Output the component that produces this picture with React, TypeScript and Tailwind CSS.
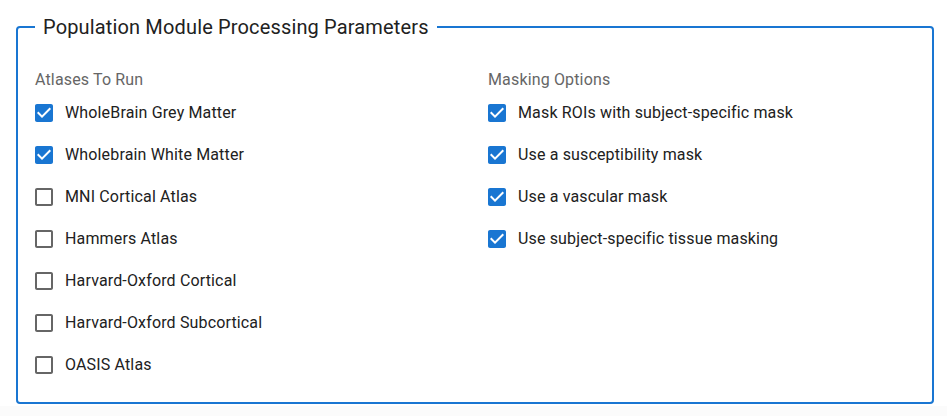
import { useState } from "react"

const atlases = [
  { id: "wbgm", label: "WholeBrain Grey Matter", checked: true },
  { id: "wbwm", label: "Wholebrain White Matter", checked: true },
  { id: "mni", label: "MNI Cortical Atlas", checked: false },
  { id: "hammers", label: "Hammers Atlas", checked: false },
  { id: "hoc", label: "Harvard-Oxford Cortical", checked: false },
  { id: "hos", label: "Harvard-Oxford Subcortical", checked: false },
  { id: "oasis", label: "OASIS Atlas", checked: false },
]

const masking = [
  { id: "roi", label: "Mask ROIs with subject-specific mask", checked: true },
  { id: "susc", label: "Use a susceptibility mask", checked: true },
  { id: "vasc", label: "Use a vascular mask", checked: true },
  { id: "tissue", label: "Use subject-specific tissue masking", checked: true },
]

function CheckRow({ label, checked, onToggle }: { label: string; checked: boolean; onToggle: () => void }) {
  return (
    <label className="flex items-center h-[42px] -ml-[12px] cursor-pointer select-none">
      <span className="p-[9px] flex">
        {checked ? (
          <svg viewBox="0 0 24 24" className="w-6 h-6 fill-[#1976d2]">
            <path d="M19 3H5c-1.11 0-2 .9-2 2v14c0 1.1.89 2 2 2h14c1.11 0 2-.9 2-2V5c0-1.1-.89-2-2-2zm-9 14l-5-5 1.41-1.41L10 14.17l7.59-7.59L19 8l-9 9z" />
          </svg>
        ) : (
          <svg viewBox="0 0 24 24" className="w-6 h-6 fill-[#666666]">
            <path d="M19 5v14H5V5h14m0-2H5c-1.1 0-2 .9-2 2v14c0 1.1.9 2 2 2h14c1.1 0 2-.9 2-2V5c0-1.1-.9-2-2-2z" />
          </svg>
        )}
        <input type="checkbox" className="hidden" checked={checked} onChange={onToggle} />
      </span>
      <span className="text-base leading-6 tracking-[0.15px] text-[#212121]">{label}</span>
    </label>
  )
}

function Group({ title, items }: { title: string; items: { id: string; label: string; checked: boolean }[] }) {
  const [state, setState] = useState(items)
  const toggle = (id: string) => setState(state.map((i) => (i.id === id ? { ...i, checked: !i.checked } : i)))
  return (
    <div className="flex flex-col">
      <div className="text-base leading-6 tracking-[0.15px] text-[#666666]">{title}</div>
      {state.map((item) => (
        <CheckRow key={item.id} label={item.label} checked={item.checked} onToggle={() => toggle(item.id)} />
      ))}
    </div>
  )
}

export default function App() {
  return (
    <div className="min-h-[416px] bg-white font-['Roboto',sans-serif] pt-[15px] flex flex-col">
      <fieldset className="ml-4 w-[918px] border-2 border-[#1976d2] rounded-[4px] px-[17px] pt-[29px] pb-[16px]">
        <legend className="px-2 text-[20px] leading-6 tracking-[0.15px] text-[#212121]">
          Population Module Processing Parameters
        </legend>
        <div className="grid grid-cols-[453px_1fr]">
          <Group title="Atlases To Run" items={atlases} />
          <Group title="Masking Options" items={masking} />
        </div>
      </fieldset>
      <div className="mt-[2px] flex-1 bg-[#fbfbfb]" />
    </div>
  )
}
